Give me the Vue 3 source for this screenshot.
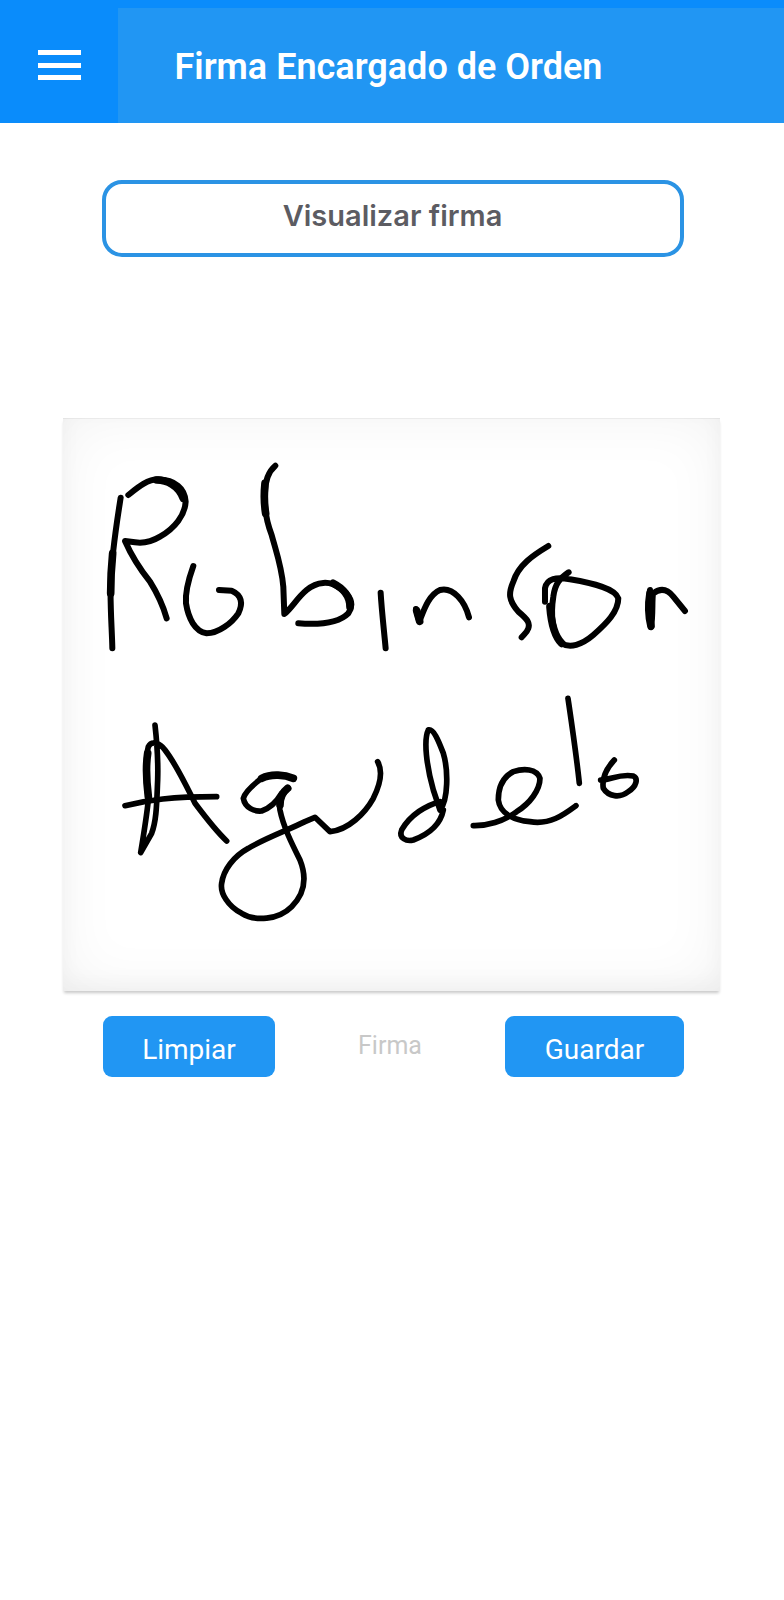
<script setup>
const groups = [
  { t: 'translate(100 460) scale(.3333)', w: 18, accents: [
    'M38 280C34 320 32 350 32 400',
    'M495 70C492 100 492 130 497 160',
    'M170 60C200 60 235 75 250 115',
    'M700 370C730 385 750 410 750 440'
  ], paths: [
    'M62 113C50 190 35 280 32 370C30 440 36 510 37 565',
    'M85 105C110 85 140 58 175 58C225 60 255 85 257 125C255 165 225 205 180 230C155 245 125 250 105 247L75 243C100 300 130 340 150 365C175 405 190 440 200 475',
    'M280 318C265 360 255 395 258 430C265 475 285 515 320 520C355 520 395 490 415 460C430 430 425 405 395 392L357 390',
    'M526 17C505 35 495 60 495 100C492 140 498 180 515 225C530 280 545 320 550 380L553 462C575 445 590 415 620 390C650 365 690 360 720 385C750 405 765 430 745 460C715 490 660 495 595 490',
    'M842 398C845 450 852 510 857 565'
  ]},
  { t: 'translate(390 540) scale(.3333)', w: 18, accents: [
    'M80 212L89 244',
    'M780 160C775 190 775 225 783 258',
    'M480 200C483 240 490 285 515 310'
  ], paths: [
    'M78 207L88 245C100 215 115 165 150 150C190 140 225 185 237 232',
    'M475 18C430 45 385 75 370 125C355 160 355 180 385 215C415 240 420 250 415 265C410 280 400 285 395 292',
    'M536 97C510 115 495 130 490 170C482 220 485 280 515 310C540 325 575 315 610 285C650 250 685 215 685 175C675 145 610 130 540 118C500 110 470 115 465 145L465 185',
    'M780 150C775 190 775 225 783 262C790 230 785 170 790 160C810 145 830 145 850 170L885 213'
  ]},
  { t: 'translate(115 710) scale(.3333)', w: 17, accents: [
    'M98 130C92 170 95 220 100 260',
    'M518 235C505 245 495 260 495 285',
    'M440 205C470 190 510 195 535 205'
  ], paths: [
    'M120 45C125 90 130 150 128 210C125 280 125 330 110 370L77 428C85 380 95 320 100 270C95 220 90 150 100 110C110 90 135 100 150 120C185 165 215 230 240 280C270 320 305 365 335 393',
    'M30 287C100 270 170 260 305 260',
    'M537 205C510 195 470 190 440 205C420 220 390 245 385 265C390 295 420 305 440 303C465 295 485 275 500 250L520 235C505 250 490 265 495 300C505 350 530 400 555 450C575 500 570 550 530 590C490 630 420 635 380 610C340 590 315 550 320 520C325 480 355 440 400 415C450 385 520 360 570 335L600 322L645 365C700 360 750 310 775 265C795 225 805 185 788 155'
  ]},
  { t: 'translate(370 690) scale(.3333)', w: 17, accents: [], paths: [
    'M175 120C160 150 170 230 190 300L210 360C235 330 235 240 220 190C205 150 190 115 175 120',
    'M210 335C170 345 120 375 95 420C85 445 110 455 130 450C170 435 210 410 220 360',
    'M310 407C350 408 400 395 440 365C480 340 510 300 510 265C500 235 460 235 430 245C400 260 385 290 385 330C390 370 430 390 480 395C540 405 580 375 618 347',
    'M594 25C605 100 620 200 628 280',
    'M733 210C710 235 695 265 700 295C715 320 750 325 775 305C800 290 805 265 790 258C750 250 720 270 692 270'
  ]}
]
</script>

<template>
  <div class="page">
    <header class="top">
      <div class="menu">
        <span class="bar"></span>
        <span class="bar"></span>
        <span class="bar"></span>
      </div>
      <div class="titlebar">
        <h1 class="title">Firma Encargado de Orden</h1>
      </div>
    </header>

    <button class="view">Visualizar firma</button>

    <div class="pad">
      <svg class="sig" viewBox="63 418 657 573" xmlns="http://www.w3.org/2000/svg">
        <g v-for="(g, i) in groups" :key="i" :transform="g.t" :stroke-width="g.w">
          <path v-for="(d, j) in g.paths" :key="j" :d="d" class="stroke" />
          <path v-for="(d, j) in g.accents" :key="'a' + j" :d="d" class="stroke accent" />
        </g>
      </svg>
    </div>

    <div class="actions">
      <button class="act limpiar">Limpiar</button>
      <span class="label">Firma</span>
      <button class="act guardar">Guardar</button>
    </div>
  </div>
</template>

<style>
html, body { margin: 0; background: #fff; }
</style>

<style scoped>
.page {
  width: 784px;
  height: 1600px;
  background: #fff;
  font-family: Roboto, "Liberation Sans", sans-serif;
  overflow: hidden;
}
.top {
  display: flex;
  height: 123px;
  background: #0a8cfb;
}
.menu {
  width: 117.5px;
  flex: none;
  box-sizing: border-box;
  padding: 50px 37px 0 37.5px;
  display: flex;
  flex-direction: column;
  gap: 7.5px;
}
.bar {
  display: block;
  height: 5px;
  background: #fff;
}
.titlebar {
  flex: 1;
  margin-top: 8px;
  background: #2196f3;
  display: flex;
  align-items: center;
  padding: 2px 0 0 57px;
}
.title {
  margin: 0;
  font-size: 36px;
  line-height: 40px;
  font-weight: 600;
  color: #fff;
  white-space: nowrap;
}
.view {
  display: block;
  box-sizing: border-box;
  width: 582px;
  height: 77px;
  margin: 57px 0 0 101.5px;
  border: 4px solid #2b93e4;
  border-radius: 20px;
  background: #fff;
  color: #5c5c62;
  font-family: Inter, "Open Sans", sans-serif;
  font-size: 29px;
  font-weight: 600;
  padding: 0 0 7px;
}
.pad {
  width: 657px;
  height: 573px;
  margin: 161px 0 0 63px;
  background: #fff;
  box-shadow: inset 0 0 60px rgba(0, 0, 0, 0.05), inset 0 -8px 20px rgba(0, 0, 0, 0.04), inset 0 1px 0 rgba(0, 0, 0, 0.05), 0 3px 3px -1px rgba(0, 0, 0, 0.22);
}
.sig {
  display: block;
  width: 100%;
  height: 100%;
}
.stroke {
  fill: none;
  stroke: #000;
  stroke-linecap: round;
  stroke-linejoin: round;
}
.accent {
  stroke-width: 23;
}
.actions {
  display: flex;
  align-items: flex-start;
  margin: 25px 0 0 103px;
}
.act {
  height: 61px;
  border: 0;
  border-radius: 9px;
  background: #2196f3;
  color: #fff;
  font-family: Roboto, "Liberation Sans", sans-serif;
  font-size: 28px;
  padding: 6px 0 0;
}
.limpiar { width: 172px; }
.guardar { width: 179px; }
.label {
  width: 230px;
  text-align: center;
  margin-top: 15px;
  color: #c8c8c8;
  font-size: 25px;
  line-height: 30px;
}
</style>
